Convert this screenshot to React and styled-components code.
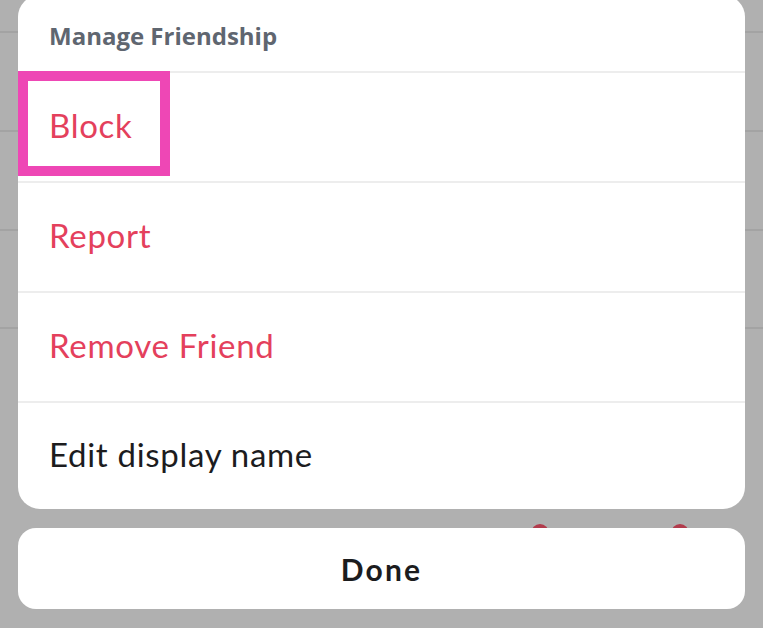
import styled, { createGlobalStyle } from "styled-components";

const GlobalStyle = createGlobalStyle`
  html, body {
    margin: 0;
    padding: 0;
    height: 100%;
    overflow: hidden;
  }
  body {
    background-color: #b0b0b0;
    background-image:
      linear-gradient(#a3a3a3, #a3a3a3),
      linear-gradient(#a3a3a3, #a3a3a3),
      linear-gradient(#a3a3a3, #a3a3a3),
      linear-gradient(#a3a3a3, #a3a3a3);
    background-repeat: no-repeat;
    background-size: 100% 2px;
    background-position: 0 31px, 0 130px, 0 229px, 0 327px;
    font-family: Lato, "Open Sans", "Noto Sans", sans-serif;
  }
`;

const actions = [
  { label: "Block", danger: true, highlighted: true },
  { label: "Report", danger: true },
  { label: "Remove Friend", danger: true },
  { label: "Edit display name" },
];

const App = () => {
  return (
    <>
      <GlobalStyle />
      <Page>
        <Sheet>
          <Header>Manage Friendship</Header>
          {actions.map((a) => (
            <Row key={a.label} $danger={a.danger}>
              {a.highlighted && <Highlight />}
              <span>{a.label}</span>
            </Row>
          ))}
        </Sheet>
        <Footer>
          <Dot style={{ left: 513 }} />
          <Dot style={{ left: 653 }} />
          <DoneButton>Done</DoneButton>
        </Footer>
      </Page>
    </>
  );
};

export default App;

const Page = styled.div`
  display: flex;
  flex-direction: column;
  gap: 19px;
  padding: 0 18px;
  margin-top: -5px;
`;

const Sheet = styled.div`
  background: #ffffff;
  border-radius: 22px;
  overflow: hidden;
  display: flex;
  flex-direction: column;
`;

const Header = styled.div`
  height: 76px;
  display: flex;
  align-items: center;
  padding: 4px 0 0 31px;
  box-sizing: border-box;
  font-family: "Open Sans", Lato, sans-serif;
  font-size: 24px;
  font-weight: 700;
  color: #5f6670;
`;

const Row = styled.div`
  position: relative;
  height: 110px;
  box-sizing: border-box;
  border-top: 2px solid #ededed;
  display: flex;
  align-items: center;
  padding: 0 0 4px 31px;
  font-size: 33px;
  letter-spacing: 0.7px;
  color: ${(p) => (p.$danger ? "#e4405c" : "#1c1c1e")};

  &:last-child {
    height: 108px;
  }
`;

const Highlight = styled.div`
  position: absolute;
  left: 0;
  top: -2px;
  width: 152px;
  height: 105px;
  box-sizing: border-box;
  border: 10px solid #ee47b5;
`;

const Footer = styled.div`
  position: relative;
`;

const Dot = styled.div`
  position: absolute;
  top: -4px;
  width: 18px;
  height: 18px;
  border-radius: 50%;
  background: #b23b4c;
`;

const DoneButton = styled.button`
  position: relative;
  width: 100%;
  height: 81px;
  border: none;
  border-radius: 18px;
  background: #ffffff;
  font-family: Lato, "Open Sans", "Noto Sans", sans-serif;
  font-size: 30px;
  font-weight: 700;
  letter-spacing: 2.2px;
  color: #1c1c1e;
  cursor: pointer;
`;
